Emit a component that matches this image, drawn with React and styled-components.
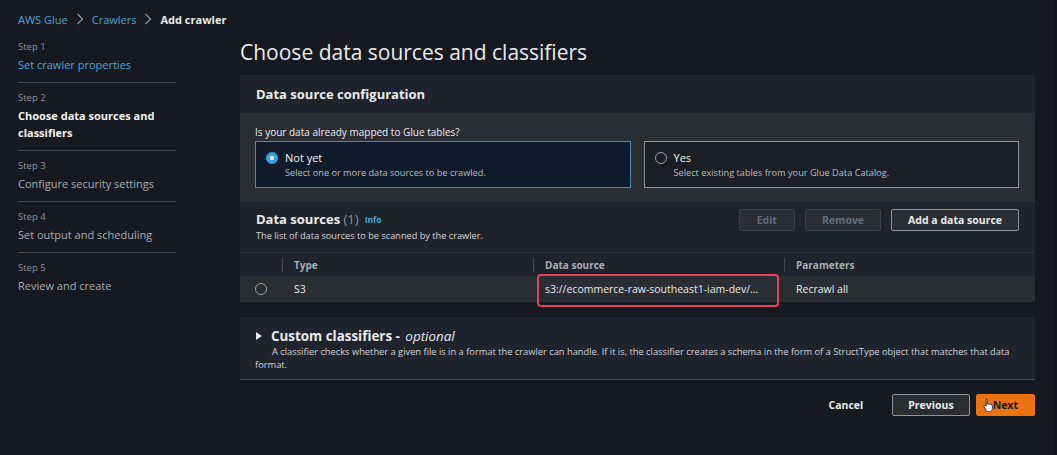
import React from 'react'
import styled, { createGlobalStyle } from 'styled-components'

const GlobalStyle = createGlobalStyle`
  html, body {
    margin: 0;
    padding: 0;
    background: #16191f;
  }
  body {
    font-family: "Open Sans", "Noto Sans", sans-serif;
    color: #e9ebed;
    -webkit-font-smoothing: antialiased;
  }
  * { box-sizing: border-box; }
`

const Page = styled.div`
  width: 1057px;
  height: 455px;
  overflow: hidden;
  border-right: 4px solid #1b1220;
  display: flex;
  flex-direction: column;
`

const Crumbs = styled.nav`
  height: 38px;
  padding-left: 18px;
  display: flex;
  align-items: center;
  gap: 8px;
  font-size: 11px;
`

const Crumb = styled.span`
  color: ${p => (p.$current ? '#e9ebed' : '#4aa6d8')};
  font-weight: ${p => (p.$current ? 700 : 500)};
`

const Chevron = styled.span`
  color: #8d9399;
  display: flex;
`

const Main = styled.div`
  display: flex;
  padding-left: 18px;
`

const Steps = styled.ol`
  list-style: none;
  margin: 2px 0 0;
  padding: 0;
  width: 158px;
  flex: none;
`

const Step = styled.li`
  padding: 8px 0 9px;
  border-bottom: ${p => (p.$last ? 'none' : '1px solid #414750')};
  &:first-child { padding-top: 0; }
`

const StepLabel = styled.div`
  font-size: 9.5px;
  line-height: 14px;
  color: #8d9399;
  margin-bottom: 2px;
`

const StepTitle = styled.div`
  font-size: 11px;
  line-height: 17px;
  color: ${p => (p.$state === 'done' ? '#4aa6d8' : p.$state === 'active' ? '#f2f3f3' : '#a7adb3')};
  font-weight: ${p => (p.$state === 'active' ? 700 : 400)};
`

const Content = styled.div`
  margin-left: 64px;
  width: 795px;
  display: flex;
  flex-direction: column;
`

const Title = styled.h1`
  margin: 0 0 9px;
  font-size: 21px;
  line-height: 28px;
  font-weight: 400;
  color: #e9ebed;
`

const Container = styled.section`
  background: #2a2e33;
`

const Header = styled.div`
  background: #1f232b;
  padding: 0 16px;
  height: ${p => p.$h};
  display: flex;
  align-items: ${p => p.$align || 'center'};
  justify-content: space-between;
`

const HeaderTitle = styled.h2`
  margin: 0;
  font-size: 13px;
  line-height: 18px;
  font-weight: 700;
  color: #e9ebed;
`

const HeaderText = styled.div`
  padding-top: 8px;
`

const Count = styled.span`
  font-weight: 400;
  color: #8d9399;
`

const Info = styled.span`
  font-size: 8.5px;
  font-weight: 700;
  color: #4aa6d8;
  margin-left: 6px;
  vertical-align: 1px;
`

const Sub = styled.p`
  margin: 0;
  font-size: 9.2px;
  line-height: 13px;
  color: #d1d5db;
`

const Body = styled.div`
  padding: 11px 16px 14px 15px;
`

const Question = styled.div`
  font-size: 10px;
  line-height: 16px;
  color: #e9ebed;
  margin-bottom: 1px;
`

const Tiles = styled.div`
  display: grid;
  grid-template-columns: 1fr 1fr;
  gap: 13px;
`

const Tile = styled.label`
  height: 47px;
  display: flex;
  align-items: flex-start;
  gap: 7px;
  padding: 8px 10px;
  border: 1px solid ${p => (p.$on ? '#3d8fc6' : '#8d9399')};
  background: ${p => (p.$on ? '#0f1b2a' : '#1b1e25')};
`

const Radio = styled.span`
  flex: none;
  width: 12px;
  height: 12px;
  margin-top: ${p => (p.$inline ? 0 : 2)}px;
  border-radius: 50%;
  border: ${p => (p.$on ? '4px solid #33a4dd' : '1.5px solid #9aa0a6')};
  background: ${p => (p.$on ? '#ffffff' : 'transparent')};
`

const TileText = styled.div`
  display: flex;
  flex-direction: column;
`

const TileTitle = styled.span`
  font-size: 11px;
  line-height: 16px;
  font-weight: 500;
  color: #f2f3f3;
`

const TileSub = styled.span`
  font-size: 9.2px;
  line-height: 13px;
  color: #b6bec9;
`

const Actions = styled.div`
  display: flex;
  gap: 10px;
  align-self: flex-start;
  margin-top: 7px;
`

const Button = styled.button`
  height: 22px;
  padding: 0 ${p => p.$px || 14}px;
  font-family: inherit;
  font-size: 10.5px;
  font-weight: 700;
  border-radius: 2px;
  cursor: pointer;
  color: ${p => (p.$variant === 'disabled' ? '#5f6b7a' : p.$variant === 'primary' ? '#0f1b2a' : '#e9ebed')};
  background: ${p => (p.$variant === 'primary' ? '#ec7211' : p.$variant === 'link' ? 'transparent' : '#2a2e33')};
  border: 1px solid ${p =>
    p.$variant === 'disabled' ? '#3a3f47' : p.$variant === 'primary' ? '#ec7211' : p.$variant === 'link' ? 'transparent' : '#8d9399'};
  margin-left: ${p => p.$ml || 0}px;
  position: relative;
`

const Table = styled.div`
  display: grid;
  grid-template-columns: 42px 251px 251px 1fr;
`

const HeadCell = styled.div`
  height: 24px;
  background: #1f232b;
  border-top: 1px solid #2e333b;
  display: flex;
  align-items: center;
  padding-left: 12px;
  font-size: 10px;
  font-weight: 700;
  color: #a7adb3;
  position: relative;
  &::before {
    content: '';
    display: ${p => (p.$first ? 'none' : 'block')};
    position: absolute;
    left: 0;
    top: 5px;
    height: 14px;
    border-left: 1px solid #414750;
  }
`

const Cell = styled.div`
  height: 26px;
  display: flex;
  align-items: center;
  padding-left: ${p => (p.$center ? '15px' : '12px')};
  font-size: 10.5px;
  color: #e9ebed;
  position: relative;
`

const Highlight = styled.span`
  position: absolute;
  left: 4px;
  top: -2px;
  width: 242px;
  height: 33px;
  border: 2px solid #e8405e;
  border-radius: 4px;
  pointer-events: none;
`

const Gap = styled.div`
  height: 15px;
`

const Expand = styled.section`
  background: #1f232b;
  border-bottom: 1px solid #414750;
  padding: 10px 16px 8px 15px;
`

const ExpandTitle = styled.h2`
  margin: 0;
  display: flex;
  align-items: center;
  gap: 9px;
  font-size: 13.4px;
  line-height: 18px;
  font-weight: 700;
  color: #e9ebed;
  em {
    font-weight: 400;
    margin-left: 2px;
  }
`

const Caret = styled.span`
  width: 0;
  height: 0;
  margin-left: 1px;
  border-top: 4px solid transparent;
  border-bottom: 4px solid transparent;
  border-left: 6px solid #e9ebed;
`

const ExpandText = styled.p`
  margin: 0;
  text-indent: 17px;
  font-size: 9.3px;
  line-height: 13px;
  color: #d1d5db;
`

const Footer = styled.div`
  display: flex;
  justify-content: flex-end;
  gap: 6px;
  margin-top: 14px;
`

const Hand = styled.svg`
  position: absolute;
  left: 6px;
  top: 3px;
`

const ChevronIcon = () => (
  <Chevron>
    <svg width="8" height="12" viewBox="0 0 8 12"><path d="M1.5 1l5 5-5 5" fill="none" stroke="#8d9399" strokeWidth="1.3" /></svg>
  </Chevron>
)

export default function App() {
  const steps = [
    { label: 'Step 1', title: 'Set crawler properties', state: 'done' },
    { label: 'Step 2', title: 'Choose data sources and classifiers', state: 'active' },
    { label: 'Step 3', title: 'Configure security settings' },
    { label: 'Step 4', title: 'Set output and scheduling' },
    { label: 'Step 5', title: 'Review and create' },
  ]

  return (
    <Page>
      <GlobalStyle />
      <Crumbs>
        <Crumb>AWS Glue</Crumb>
        <ChevronIcon />
        <Crumb>Crawlers</Crumb>
        <ChevronIcon />
        <Crumb $current>Add crawler</Crumb>
      </Crumbs>

      <Main>
        <Steps>
          {steps.map((s, i) => (
            <Step key={s.label} $last={i === steps.length - 1}>
              <StepLabel>{s.label}</StepLabel>
              <StepTitle $state={s.state}>{s.title}</StepTitle>
            </Step>
          ))}
        </Steps>

        <Content>
          <Title>Choose data sources and classifiers</Title>

          <Container>
            <Header $h="38px">
              <HeaderTitle>Data source configuration</HeaderTitle>
            </Header>
            <Body>
              <Question>Is your data already mapped to Glue tables?</Question>
              <Tiles>
                <Tile $on>
                  <Radio $on />
                  <TileText>
                    <TileTitle>Not yet</TileTitle>
                    <TileSub>Select one or more data sources to be crawled.</TileSub>
                  </TileText>
                </Tile>
                <Tile>
                  <Radio />
                  <TileText>
                    <TileTitle>Yes</TileTitle>
                    <TileSub>Select existing tables from your Glue Data Catalog.</TileSub>
                  </TileText>
                </Tile>
              </Tiles>
            </Body>

            <Header $h="50px" $align="flex-start">
              <HeaderText>
                <HeaderTitle>
                  Data sources <Count>(1)</Count>
                  <Info>Info</Info>
                </HeaderTitle>
                <Sub>The list of data sources to be scanned by the crawler.</Sub>
              </HeaderText>
              <Actions>
                <Button $variant="disabled" $px={17}>Edit</Button>
                <Button $variant="disabled" $px={16}>Remove</Button>
                <Button $px={16}>Add a data source</Button>
              </Actions>
            </Header>

            <Table>
              <HeadCell $first />
              <HeadCell>Type</HeadCell>
              <HeadCell>Data source</HeadCell>
              <HeadCell>Parameters</HeadCell>

              <Cell $center><Radio $inline /></Cell>
              <Cell>S3</Cell>
              <Cell>
                s3://ecommerce-raw-southeast1-iam-dev/...
                <Highlight />
              </Cell>
              <Cell>Recrawl all</Cell>
            </Table>
          </Container>

          <Gap />

          <Expand>
            <ExpandTitle>
              <Caret />
              <span>Custom classifiers - <em>optional</em></span>
            </ExpandTitle>
            <ExpandText>
              A classifier checks whether a given file is in a format the crawler can handle. If it is, the classifier creates a schema in the form of a StructType object that matches that data format.
            </ExpandText>
          </Expand>

          <Footer>
            <Button $variant="link" $px={17}>Cancel</Button>
            <Button $px={15} $ml={5}>Previous</Button>
            <Button $variant="primary" $px={16}>
              Next
              <Hand width="11" height="14" viewBox="0 0 11 14">
                <path d="M3.2 1.2c.6 0 1 .4 1 1V6l.3-.1c.5-.2 1 0 1.2.4.4-.3 1-.2 1.3.2.4-.2 1-.1 1.2.4l.3.1c.5 0 .9.4.9.9v2.4c0 1.9-1.3 3.4-3.2 3.4H5.3c-.9 0-1.600-.4-2.1-1.1L1 8.6c-.3-.5-.2-1 .2-1.3.4-.3 1-.2 1.3.2l.6.8V2.2c0-.6.4-1 1-1z" fill="#ffffff" stroke="#1a1a1a" strokeWidth="0.8" />
              </Hand>
            </Button>
          </Footer>
        </Content>
      </Main>
    </Page>
  )
}
